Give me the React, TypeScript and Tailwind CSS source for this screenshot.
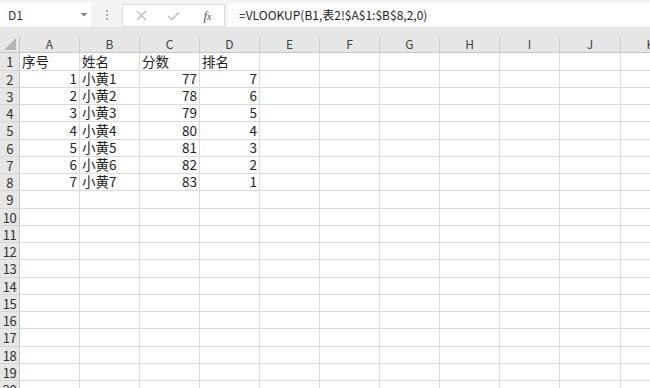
import React from "react";

const cols = ["A", "B", "C", "D", "E", "F", "G", "H", "I", "J", "K"];
const colW = ["w-[60px]", "w-[60px]", "w-[60px]", "w-[60px]", "w-[60px]", "w-[60px]", "w-[60px]", "w-[60px]", "w-[60px]", "w-[61px]", "w-[60px]"];

type Cell = { v: string; right?: boolean };
const data: Cell[][] = [
  [{ v: "序号" }, { v: "姓名" }, { v: "分数" }, { v: "排名" }],
  [{ v: "1", right: true }, { v: "小黄1" }, { v: "77", right: true }, { v: "7", right: true }],
  [{ v: "2", right: true }, { v: "小黄2" }, { v: "78", right: true }, { v: "6", right: true }],
  [{ v: "3", right: true }, { v: "小黄3" }, { v: "79", right: true }, { v: "5", right: true }],
  [{ v: "4", right: true }, { v: "小黄4" }, { v: "80", right: true }, { v: "4", right: true }],
  [{ v: "5", right: true }, { v: "小黄5" }, { v: "81", right: true }, { v: "3", right: true }],
  [{ v: "6", right: true }, { v: "小黄6" }, { v: "82", right: true }, { v: "2", right: true }],
  [{ v: "7", right: true }, { v: "小黄7" }, { v: "83", right: true }, { v: "1", right: true }],
];

const font = { fontFamily: '"Noto Sans CJK SC", "Noto Sans", sans-serif' };

export default function App() {
  const rows = Array.from({ length: 20 }, (_, i) => i + 1);
  return (
    <div className="w-[650px] h-[388px] overflow-hidden bg-white text-[#222]" style={font}>
      {/* formula bar */}
      <div className="h-[27px] bg-[#f3f3f3] flex items-start pt-[3px]">
        <div className="w-[91px] h-[23px] bg-white flex items-center pl-[8px] pr-[3px] text-[12px] text-[#333]">
          <span className="flex-1">D1</span>
          <svg width="6" height="4" viewBox="0 0 6 4" className="mr-[1px]">
            <path d="M0 0 L6 0 L3 3.5 Z" fill="#777" />
          </svg>
        </div>
        <div className="w-[31px] h-[23px] flex flex-col items-center justify-center gap-[2px]">
          <div className="w-[2px] h-[2px] bg-[#a8a8a8]" />
          <div className="w-[2px] h-[2px] bg-[#a8a8a8]" />
          <div className="w-[2px] h-[2px] bg-[#a8a8a8]" />
        </div>
        <div className="w-[103px] h-[23px] mt-[1px] bg-white border border-[#dcdcdc] flex items-center">
          <div className="w-[36px] flex justify-center">
            <svg width="11" height="11" viewBox="0 0 11 11">
              <path d="M1 1 L10 10 M10 1 L1 10" stroke="#b8b8b8" strokeWidth="1.2" fill="none" />
            </svg>
          </div>
          <div className="w-[28px] flex justify-center">
            <svg width="13" height="10" viewBox="0 0 13 10">
              <path d="M1 5 L4.8 8.8 L12 1" stroke="#b8b8b8" strokeWidth="1.3" fill="none" />
            </svg>
          </div>
          <div className="flex-1 flex justify-center pl-[4px]">
            <span className="italic text-[13px] text-[#555] leading-none" style={{ fontFamily: '"Liberation Serif", serif' }}>
              f<span className="text-[10px]">x</span>
            </span>
          </div>
        </div>
        <div className="w-[3px]" />
        <div className="flex-1 h-[23px] bg-white flex items-center pl-[11px] text-[12px] text-[#222]">
          =VLOOKUP(B1,表2!$A$1:$B$8,2,0)
        </div>
      </div>
      {/* gap */}
      <div className="h-[9px] bg-[#e6e6e6]" />
      {/* column header */}
      <div className="h-[17px] flex bg-[#e6e6e6] border-b border-[#c6c6c6]">
        <div className="w-[20px] shrink-0 border-r border-[#c6c6c6] relative">
          <svg width="12" height="12" viewBox="0 0 12 12" className="absolute right-[3px] bottom-[2px]">
            <path d="M12 0 L12 12 L0 12 Z" fill="#b4b4b4" />
          </svg>
        </div>
        {cols.map((c, i) => (
          <div
            key={c}
            className={`${colW[i]} shrink-0 border-r border-[#d0d0d0] flex items-center justify-center text-[12px] text-[#444]`}
          >
            {c}
          </div>
        ))}
      </div>
      {/* rows */}
      {rows.map((r, ri) => (
        <div key={r} className={`${ri % 4 === 0 ? "h-[18px]" : "h-[17px]"} flex`}>
          <div className="w-[20px] shrink-0 bg-[#e6e6e6] border-r border-[#c6c6c6] border-b border-b-[#d6d6d6] flex items-center justify-center text-[13px] text-[#333] leading-none tracking-[-0.5px]">
            {r}
          </div>
          {cols.map((c, ci) => {
            const cell = data[ri]?.[ci];
            return (
              <div
                key={c}
                className={`${colW[ci]} shrink-0 border-b border-r border-[#dadada] flex items-center text-[13.5px] leading-none ${cell?.right ? "justify-end pr-[2px]" : "pl-[2px]"}`}
              >
                {cell?.v}
              </div>
            );
          })}
        </div>
      ))}
    </div>
  );
}
